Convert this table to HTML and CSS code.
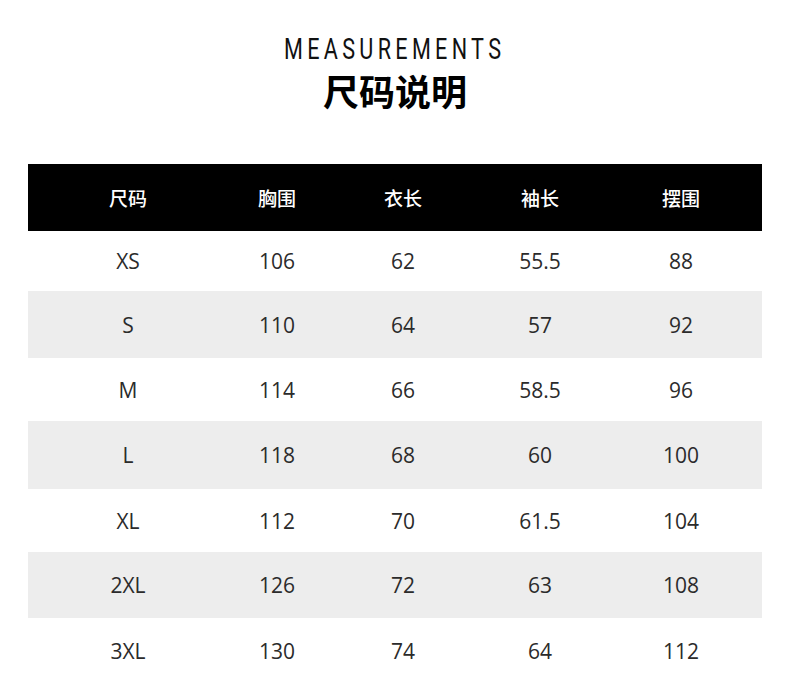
FILE: index.html
```html
<!DOCTYPE html>
<html lang="zh">
<head>
<meta charset="utf-8">
<title>尺码说明</title>
<link rel="stylesheet" href="styles.css">
</head>
<body>
<header class="title">
  <div class="title-en"><span>MEASUREMENTS</span></div>
  <h1 class="title-zh">尺码说明</h1>
</header>
<section class="table">
  <div class="row head"><span class="cell">尺码</span><span class="cell">胸围</span><span class="cell">衣长</span><span class="cell">袖长</span><span class="cell">摆围</span></div>
  <div class="row"><span class="cell">XS</span><span class="cell">106</span><span class="cell">62</span><span class="cell">55.5</span><span class="cell">88</span></div>
  <div class="row alt"><span class="cell">S</span><span class="cell">110</span><span class="cell">64</span><span class="cell">57</span><span class="cell">92</span></div>
  <div class="row"><span class="cell">M</span><span class="cell">114</span><span class="cell">66</span><span class="cell">58.5</span><span class="cell">96</span></div>
  <div class="row alt"><span class="cell">L</span><span class="cell">118</span><span class="cell">68</span><span class="cell">60</span><span class="cell">100</span></div>
  <div class="row"><span class="cell">XL</span><span class="cell">112</span><span class="cell">70</span><span class="cell">61.5</span><span class="cell">104</span></div>
  <div class="row alt"><span class="cell">2XL</span><span class="cell">126</span><span class="cell">72</span><span class="cell">63</span><span class="cell">108</span></div>
  <div class="row"><span class="cell">3XL</span><span class="cell">130</span><span class="cell">74</span><span class="cell">64</span><span class="cell">112</span></div>
</section>
</body>
</html>
```
FILE: styles.css
```css
html, body {
  margin: 0;
  padding: 0;
  background: #fff;
}
body {
  width: 790px;
  height: 694px;
  overflow: hidden;
  font-family: "Open Sans", "Noto Sans CJK SC", sans-serif;
  color: #2b2b2b;
}
.title {
  display: flex;
  flex-direction: column;
  align-items: center;
  padding-top: 34px;
}
.title-en {
  height: 30px;
  line-height: 30px;
  display: flex;
  justify-content: center;
}
.title-en span {
  display: inline-block;
  font-family: Roboto, sans-serif;
  font-weight: 400;
  font-size: 30px;
  letter-spacing: 6px;
  color: #111;
  transform: scaleX(0.72);
  white-space: nowrap;
}
.title-zh {
  margin: 4px 0 0;
  font-family: "Noto Sans CJK SC", sans-serif;
  font-weight: 700;
  font-size: 36px;
  line-height: 44px;
  color: #000;
}
.table {
  margin: 52px 28px 0;
  width: 734px;
  display: grid;
  grid-template-columns: 200px 98px 154px 120px 162px;
  grid-template-rows: 67px 60px 67px 63px 68px 63px 66px 66px;
}
.row {
  display: contents;
}
.cell {
  display: flex;
  align-items: center;
  justify-content: center;
  font-size: 21px;
  color: #2b2b2b;
}
.head .cell {
  background: #000;
  color: #fff;
  font-family: "Noto Sans CJK SC", sans-serif;
  font-size: 19px;
  font-weight: 500;
}
.alt .cell {
  background: #ededed;
}
```
